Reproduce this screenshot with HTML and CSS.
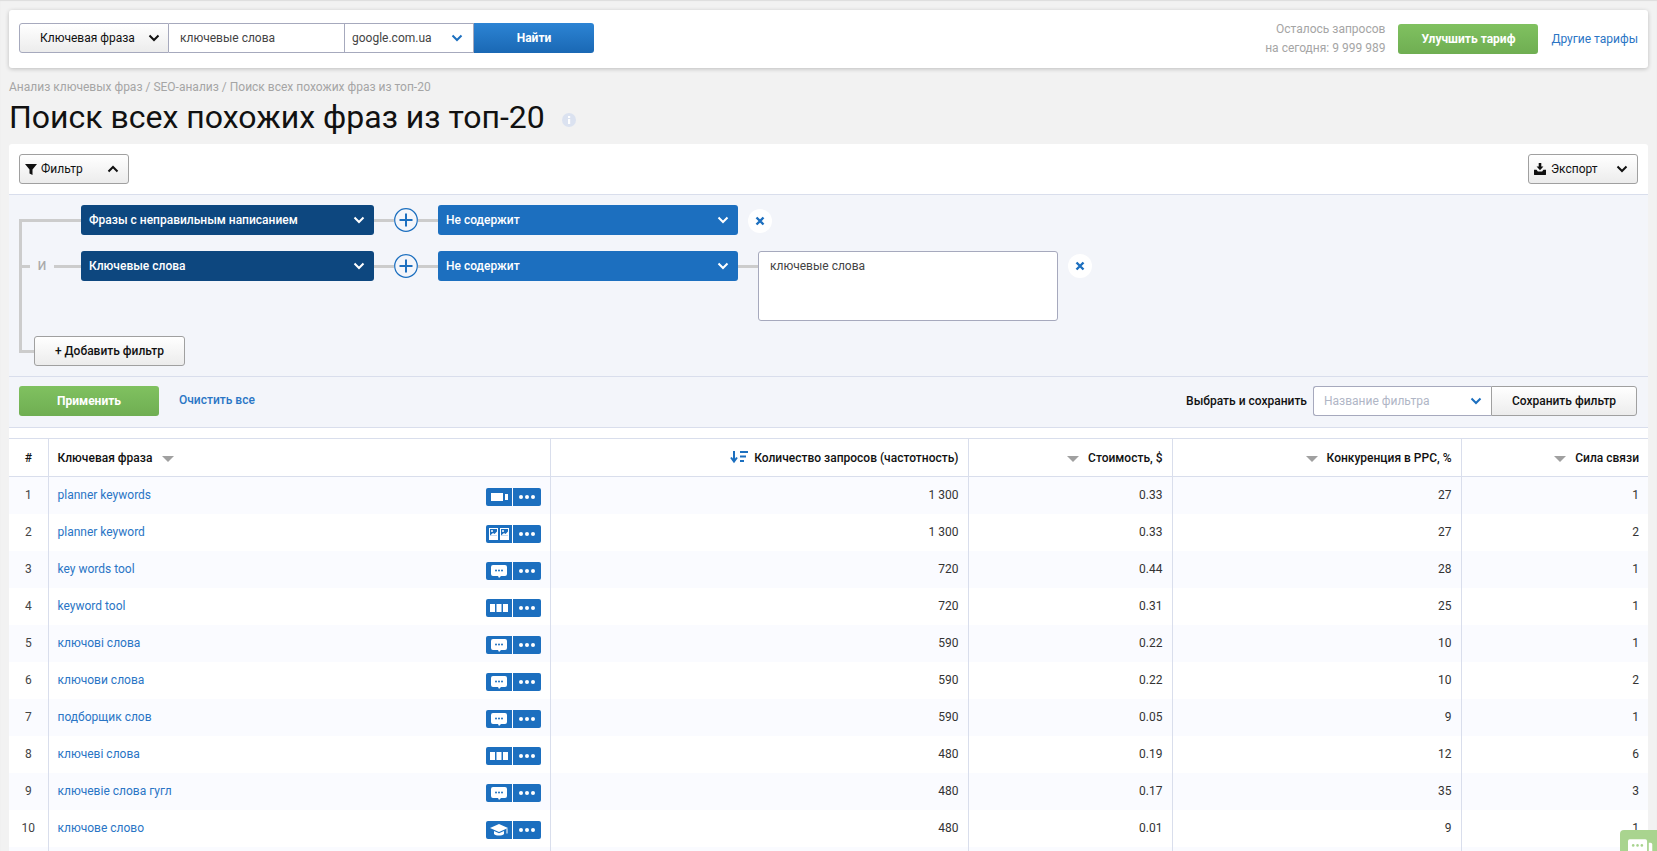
FILE: index.html
```html
<!DOCTYPE html>
<html lang="ru">
<head>
<meta charset="utf-8">
<title>Поиск всех похожих фраз из топ-20</title>
<link rel="stylesheet" href="styles.css">
</head>
<body>
<svg class="defs" width="0" height="0" aria-hidden="true">
  <symbol id="i-chev" viewBox="0 0 12 8"><path d="M1.500 1.500 6 6l4.500-4.500" fill="none" stroke="currentColor" stroke-width="2"/></symbol>
  <symbol id="i-video" viewBox="0 0 26 18"><rect x="5" y="5" width="12" height="8" fill="#fff"/><rect x="19" y="6" width="3" height="6" fill="#fff"/></symbol>
  <symbol id="i-images" viewBox="0 0 26 18"><rect x="3" y="3" width="9" height="12" fill="#fff"/><rect x="14" y="3" width="9" height="12" fill="#fff"/><rect x="4" y="4" width="7" height="6.500" fill="#1c6fbf"/><rect x="15" y="4" width="7" height="6.500" fill="#1c6fbf"/><path d="M4 10.500 7 8l1.500 1L11 6.500v4zM15 10.500 18 8l1.500 1L22 6.500v4z" fill="#fff"/><circle cx="6" cy="6" r="1" fill="#fff"/><circle cx="17" cy="6" r="1" fill="#fff"/></symbol>
  <symbol id="i-chat" viewBox="0 0 26 18"><path d="M7 3h12a2 2 0 0 1 2 2v7a2 2 0 0 1-2 2h-4l-2 2-1-2H7a2 2 0 0 1-2-2V5a2 2 0 0 1 2-2z" fill="#fff"/><circle cx="10" cy="8.500" r="1" fill="#1c6fbf"/><circle cx="13" cy="8.500" r="1" fill="#1c6fbf"/><circle cx="16" cy="8.500" r="1" fill="#1c6fbf"/></symbol>
  <symbol id="i-cols" viewBox="0 0 26 18"><rect x="4" y="5" width="5" height="8" fill="#fff"/><rect x="10.500" y="5" width="5" height="8" fill="#fff"/><rect x="17" y="5" width="5" height="8" fill="#fff"/></symbol>
  <symbol id="i-cap" viewBox="0 0 26 18"><path d="M13 3 22 7 13 11 4 7z" fill="#fff"/><path d="M8 10v3c2 2 8 2 10 0v-3l-5 2.200z" fill="#fff"/><rect x="20.500" y="7.500" width="1" height="5" fill="#fff"/></symbol>
  <symbol id="i-more" viewBox="0 0 28 18"><circle cx="8" cy="9" r="2" fill="#fff"/><circle cx="14" cy="9" r="2" fill="#fff"/><circle cx="20" cy="9" r="2" fill="#fff"/></symbol>
  <symbol id="i-plus" viewBox="0 0 24 24"><circle cx="12" cy="12" r="11.300" fill="#f3f5fa" stroke="#1c6fbf" stroke-width="1.200"/><path d="M12 5.500v13M5.500 12h13" stroke="#1c6fbf" stroke-width="2" fill="none"/></symbol>
  <symbol id="i-x" viewBox="0 0 24 24"><circle cx="12" cy="12" r="12" fill="#fff"/><path d="M8.500 8.500l7 7M15.500 8.500l-7 7" stroke="#1c6fbf" stroke-width="2.400" fill="none"/></symbol>
</svg>

<div class="page">
  <header class="topbar">
    <div class="search">
      <div class="s-type">Ключевая фраза<svg class="chev"><use href="#i-chev"/></svg></div>
      <div class="s-input">ключевые слова</div>
      <div class="s-engine">google.com.ua<svg class="chev blue"><use href="#i-chev"/></svg></div>
      <div class="s-find">Найти</div>
    </div>
    <div class="account">
      <div class="remain">Осталось запросов<br>на сегодня: 9 999 989</div>
      <div class="btn-green upgrade">Улучшить тариф</div>
      <a class="link other">Другие тарифы</a>
    </div>
  </header>

  <div class="crumbs">Анализ ключевых фраз / SEO-анализ / Поиск всех похожих фраз из топ-20</div>
  <div class="title-row">
    <h1>Поиск всех похожих фраз из топ-20</h1>
    <svg class="info" viewBox="0 0 14 14"><circle cx="7" cy="7" r="7" fill="#dbe2f0"/><rect x="6" y="6" width="2.200" height="5" fill="#fff"/><rect x="6" y="3" width="2.200" height="2" fill="#fff"/></svg>
  </div>

  <section class="card">
    <div class="toolbar">
      <div class="btn-grey filter-btn">
        <svg class="ic-funnel" viewBox="0 0 12 12"><path d="M0 1h12L7.500 6.500V12l-3-1.500v-4z" fill="#111"/></svg>
        <span class="grow">Фильтр</span>
        <svg class="chev up"><use href="#i-chev"/></svg>
      </div>
      <div class="btn-grey export-btn">
        <svg class="ic-export" viewBox="0 0 14 14"><path d="M5.500 0h3v4H11L7 8.500 3 4h2.500z" fill="#111"/><path d="M0 8h3l1.500 2h5L11 8h3v5a1 1 0 0 1-1 1H1a1 1 0 0 1-1-1z" fill="#111"/></svg>
        <span class="grow">Экспорт</span>
        <svg class="chev"><use href="#i-chev"/></svg>
      </div>
    </div>

    <div class="filters">
      <div class="tree">
        <div class="f-row">
          <div class="f-lead"><span class="h-line fill"></span></div>
          <div class="sel dark">Фразы с неправильным написанием<svg class="chev"><use href="#i-chev"/></svg></div>
          <span class="h-line w20"></span><svg class="plus"><use href="#i-plus"/></svg><span class="h-line w20"></span>
          <div class="sel mid">Не содержит<svg class="chev"><use href="#i-chev"/></svg></div>
          <svg class="x first"><use href="#i-x"/></svg>
        </div>
        <div class="f-row second">
          <div class="f-lead"><span class="h-line w8"></span><span class="and">И</span><span class="h-line fill"></span></div>
          <div class="sel dark">Ключевые слова<svg class="chev"><use href="#i-chev"/></svg></div>
          <span class="h-line w20"></span><svg class="plus"><use href="#i-plus"/></svg><span class="h-line w20"></span>
          <div class="sel mid">Не содержит<svg class="chev"><use href="#i-chev"/></svg></div>
          <span class="h-line w20"></span>
          <div class="area">ключевые слова</div>
          <svg class="x"><use href="#i-x"/></svg>
        </div>
        <div class="add-row">
          <span class="h-line w12"></span>
          <div class="btn-grey add-btn">+ Добавить фильтр</div>
        </div>
      </div>
    </div>

    <div class="actions">
      <div class="btn-green apply">Применить</div>
      <a class="link clear">Очистить все</a>
      <div class="save">
        <span class="save-label">Выбрать и сохранить</span>
        <div class="save-sel">Название фильтра<svg class="chev blue"><use href="#i-chev"/></svg></div>
        <div class="btn-grey save-btn">Сохранить фильтр</div>
      </div>
    </div>

    <table class="grid">
      <colgroup><col class="c1"><col class="c2"><col class="c3"><col class="c4"><col class="c5"><col class="c6"></colgroup>
      <thead>
        <tr>
          <th class="ctr">#</th>
          <th class="left">Ключевая фраза<i class="tri after"></i></th>
          <th><svg class="ic-sort" viewBox="0 0 18 14"><path d="M4 1v9M1 7.500 4 11.500l3-4" fill="none" stroke="#1c6fbf" stroke-width="2"/><path d="M10 2h8M10 6.500h6M10 11h4" stroke="#1c6fbf" stroke-width="2" fill="none"/></svg>Количество запросов (частотность)</th>
          <th><i class="tri"></i>Стоимость, $</th>
          <th><i class="tri"></i>Конкуренция в PPC, %</th>
          <th><i class="tri"></i>Сила связи</th>
        </tr>
      </thead>
      <tbody>
        <tr><td class="ctr">1</td><td class="kw"><a class="link">planner keywords</a><span class="tools"><svg class="t1"><use href="#i-video"/></svg><svg class="t2"><use href="#i-more"/></svg></span></td><td>1 300</td><td>0.33</td><td>27</td><td>1</td></tr>
        <tr><td class="ctr">2</td><td class="kw"><a class="link">planner keyword</a><span class="tools"><svg class="t1"><use href="#i-images"/></svg><svg class="t2"><use href="#i-more"/></svg></span></td><td>1 300</td><td>0.33</td><td>27</td><td>2</td></tr>
        <tr><td class="ctr">3</td><td class="kw"><a class="link">key words tool</a><span class="tools"><svg class="t1"><use href="#i-chat"/></svg><svg class="t2"><use href="#i-more"/></svg></span></td><td>720</td><td>0.44</td><td>28</td><td>1</td></tr>
        <tr><td class="ctr">4</td><td class="kw"><a class="link">keyword tool</a><span class="tools"><svg class="t1"><use href="#i-cols"/></svg><svg class="t2"><use href="#i-more"/></svg></span></td><td>720</td><td>0.31</td><td>25</td><td>1</td></tr>
        <tr><td class="ctr">5</td><td class="kw"><a class="link">ключові слова</a><span class="tools"><svg class="t1"><use href="#i-chat"/></svg><svg class="t2"><use href="#i-more"/></svg></span></td><td>590</td><td>0.22</td><td>10</td><td>1</td></tr>
        <tr><td class="ctr">6</td><td class="kw"><a class="link">ключови слова</a><span class="tools"><svg class="t1"><use href="#i-chat"/></svg><svg class="t2"><use href="#i-more"/></svg></span></td><td>590</td><td>0.22</td><td>10</td><td>2</td></tr>
        <tr><td class="ctr">7</td><td class="kw"><a class="link">подборщик слов</a><span class="tools"><svg class="t1"><use href="#i-chat"/></svg><svg class="t2"><use href="#i-more"/></svg></span></td><td>590</td><td>0.05</td><td>9</td><td>1</td></tr>
        <tr><td class="ctr">8</td><td class="kw"><a class="link">ключеві слова</a><span class="tools"><svg class="t1"><use href="#i-cols"/></svg><svg class="t2"><use href="#i-more"/></svg></span></td><td>480</td><td>0.19</td><td>12</td><td>6</td></tr>
        <tr><td class="ctr">9</td><td class="kw"><a class="link">ключевіе слова гугл</a><span class="tools"><svg class="t1"><use href="#i-chat"/></svg><svg class="t2"><use href="#i-more"/></svg></span></td><td>480</td><td>0.17</td><td>35</td><td>3</td></tr>
        <tr><td class="ctr">10</td><td class="kw"><a class="link">ключове слово</a><span class="tools"><svg class="t1"><use href="#i-cap"/></svg><svg class="t2"><use href="#i-more"/></svg></span></td><td>480</td><td>0.01</td><td>9</td><td>1</td></tr>
        <tr><td>&nbsp;</td><td></td><td></td><td></td><td></td><td></td></tr>
      </tbody>
    </table>
  </section>
</div>

<div class="chat-widget">
  <svg viewBox="0 0 30 20"><path d="M2 0h18a2 2 0 0 1 2 2v18H0V2a2 2 0 0 1 2-2z" fill="#fff"/><path d="M24 4h2a2 2 0 0 1 2 2v14h-4z" fill="#fff"/><circle cx="6" cy="7" r="1.500" fill="#a9d48f"/><circle cx="11" cy="7" r="1.500" fill="#a9d48f"/><circle cx="16" cy="7" r="1.500" fill="#a9d48f"/></svg>
</div>
</body>
</html>
```

FILE: styles.css
```css
* { box-sizing: border-box; }
html, body { height: 100%; overflow: hidden; }
body { margin: 0; background: #f2f2f2; font-family: Roboto, "Liberation Sans", sans-serif; font-size: 12px; color: #111; box-shadow: inset 0 1px 1px #ddd; }
.defs { position: absolute; }
.page { padding: 10px 9px 0; height: 851px; overflow: hidden; }
a { cursor: pointer; }
.link { color: #2a75c5; text-decoration: none; }

.chev { width: 12px; height: 8px; color: #111; flex: none; }
.chev.blue { color: #1c6fbf; }
.chev.up { transform: rotate(180deg); }

.topbar { height: 58px; background: #fff; border-radius: 3px; box-shadow: 0 1px 4px rgba(0,0,0,.22); display: flex; justify-content: space-between; align-items: flex-start; padding: 13px 10px 0; }
.search { display: flex; height: 30px; }
.s-type { width: 150px; border: 1px solid #a6a9bd; border-radius: 3px 0 0 3px; background: linear-gradient(#fff,#ececec); display: flex; align-items: center; justify-content: space-between; padding: 0 8px 0 20px; }
.s-input { width: 176px; border: 1px solid #a6a9bd; border-left: 0; background: #fff; display: flex; align-items: center; padding-left: 11px; color: #444; }
.s-engine { width: 129px; border: 1px solid #a6a9bd; border-left: 0; background: #fff; display: flex; align-items: center; justify-content: space-between; padding: 0 10px 0 7px; color: #444; }
.s-find { width: 120px; border-radius: 0 3px 3px 0; background: linear-gradient(#2c84d4,#1a68b4); color: #fff; font-weight: 700; display: flex; align-items: center; justify-content: center; }
.account { display: flex; align-items: center; height: 30px; margin-top: 1px; }
.remain { color: #a5a5a5; text-align: right; line-height: 19px; }
.btn-green { background: linear-gradient(#80c160,#6fae52); color: #fff; font-weight: 700; border-radius: 3px; display: flex; align-items: center; justify-content: center; }
.upgrade { width: 140px; height: 30px; margin-left: 13px; }
.other { margin-left: 13px; }

.crumbs { color: #a5a5a5; margin-top: 11px; line-height: 16px; }
.title-row { display: flex; align-items: center; height: 40px; margin-top: 2px; }
h1 { margin: 0; font-size: 32px; font-weight: 400; color: #111; line-height: 40px; }
.info { width: 14px; height: 14px; margin-left: 17px; margin-top: 6px; }

.card { background: #fff; border-radius: 3px 3px 0 0; margin-top: 7px; }
.toolbar { height: 51px; padding: 10px 10px 0; display: flex; justify-content: space-between; border-bottom: 1px solid #d9deec; }
.btn-grey { border: 1px solid #a0a0a0; border-radius: 3px; background: linear-gradient(#fff,#ececec); display: flex; align-items: center; color: #111; }
.filter-btn { width: 110px; height: 30px; padding: 0 9px 0 5px; }
.export-btn { width: 110px; height: 30px; padding: 0 9px 0 5px; }
.grow { flex: 1; }
.ic-funnel { width: 12px; height: 12px; margin-right: 4px; }
.ic-export { width: 12px; height: 12px; margin-right: 5px; }

.filters { background: #f3f5fa; height: 182px; border-bottom: 1px solid #d9deec; padding: 10px 0 0 10px; }
.tree { display: flow-root; border-left: 3px solid #ccc; margin-top: 14px; height: 134px; position: relative; }
.tree .f-row:first-child { margin-top: -14px; }
.f-row { display: flex; align-items: flex-start; height: 30px; }
.f-row.second { margin-top: 16px; }
.h-line { display: block; height: 3px; background: #ccc; margin-top: 14px; flex: none; }
.f-lead { width: 59px; display: flex; flex: none; align-items: flex-start; }
.h-line.fill { flex: 1; }
.h-line.w8 { width: 8px; }
.h-line.w12 { width: 12px; }
.h-line.w20 { width: 20px; }
.and { width: 24px; text-align: center; color: #aaa; font-weight: 500; line-height: 30px; }
.sel { height: 30px; border-radius: 3px; color: #fff; display: flex; align-items: center; justify-content: space-between; padding: 0 9px 0 8px; font-weight: 500; flex: none; }
.sel.dark { width: 293px; background: #0d477f; }
.sel.mid { width: 300px; background: #1c6fbf; }
.sel .chev { color: #fff; }
.plus { width: 24px; height: 24px; margin-top: 3px; flex: none; }
.x { width: 24px; height: 24px; margin: 3px 0 0 10px; flex: none; }
.x.first { margin: 4px 0 0 10px; }
.area { width: 300px; height: 70px; background: #fff; border: 1px solid #a6a9bd; border-radius: 3px; padding: 7px 11px; color: #444; flex: none; }
.add-row { position: absolute; left: -3px; bottom: -13px; display: flex; align-items: flex-start; padding-left: 3px; }
.add-btn { width: 151px; height: 30px; justify-content: center; font-weight: 500; }

.actions { height: 51px; background: #f3f5fa; border-bottom: 1px solid #d9deec; display: flex; align-items: flex-start; padding: 9px 11px 0 10px; }
.apply { width: 140px; height: 30px; }
.clear { margin-left: 20px; line-height: 28px; font-weight: 500; }
.save { margin-left: auto; display: flex; align-items: center; }
.save-label { margin-right: 6px; font-weight: 500; margin-top: -1px; }
.save-sel { width: 178px; height: 30px; background: #fff; border: 1px solid #a6a9bd; border-radius: 3px 0 0 3px; border-right: 0; color: #b0b6c6; display: flex; align-items: center; justify-content: space-between; padding: 0 9px 0 10px; }
.save-btn { width: 146px; height: 30px; border-radius: 0 3px 3px 0; justify-content: center; font-weight: 500; }

.grid { width: 100%; border-collapse: collapse; table-layout: fixed; margin-top: 10px; }
.c1 { width: 39px; } .c2 { width: 502px; } .c3 { width: 418px; } .c4 { width: 204px; } .c5 { width: 289px; } .c6 { width: 187px; }
.grid th { height: 38px; font-weight: 500; text-align: right; padding: 0 9px; border-top: 1px solid #d9deec; border-bottom: 1px solid #d9deec; border-left: 1px solid #d9deec; white-space: nowrap; color: #111; }
.grid th:first-child, .grid td:first-child { border-left: 0; }
.grid th.left { text-align: left; }
.grid th.ctr, .grid td.ctr { text-align: center; padding: 0; }
.grid td { height: 37px; padding: 0 9px; text-align: right; border-left: 1px solid #d9deec; color: #333; }
.grid tbody tr:nth-child(odd) { background: #fafbff; }
.grid td.ctr { color: #444; }
.grid td.kw { text-align: left; position: relative; }
.tri { display: inline-block; width: 0; height: 0; border-left: 6px solid transparent; border-right: 6px solid transparent; border-top: 6px solid #a0a0a0; margin-right: 9px; }
.tri.after { margin: 0 0 0 10px; }
.ic-sort { width: 18px; height: 14px; margin-right: 6px; vertical-align: -2px; }
.tools { position: absolute; right: 9px; top: 11px; display: flex; gap: 1px; }
.t1 { width: 26px; height: 18px; background: #1c6fbf; border-radius: 2px 0 0 2px; }
.t2 { width: 28px; height: 18px; background: #1c6fbf; border-radius: 0 2px 2px 0; }

.chat-widget { position: fixed; right: 0; top: 830px; width: 37px; height: 21px; background: #a9d48f; border-radius: 4px 0 0 0; padding: 9px 0 0 8px; overflow: hidden; }
.chat-widget svg { display: block; width: 26px; height: 18px; }
```
